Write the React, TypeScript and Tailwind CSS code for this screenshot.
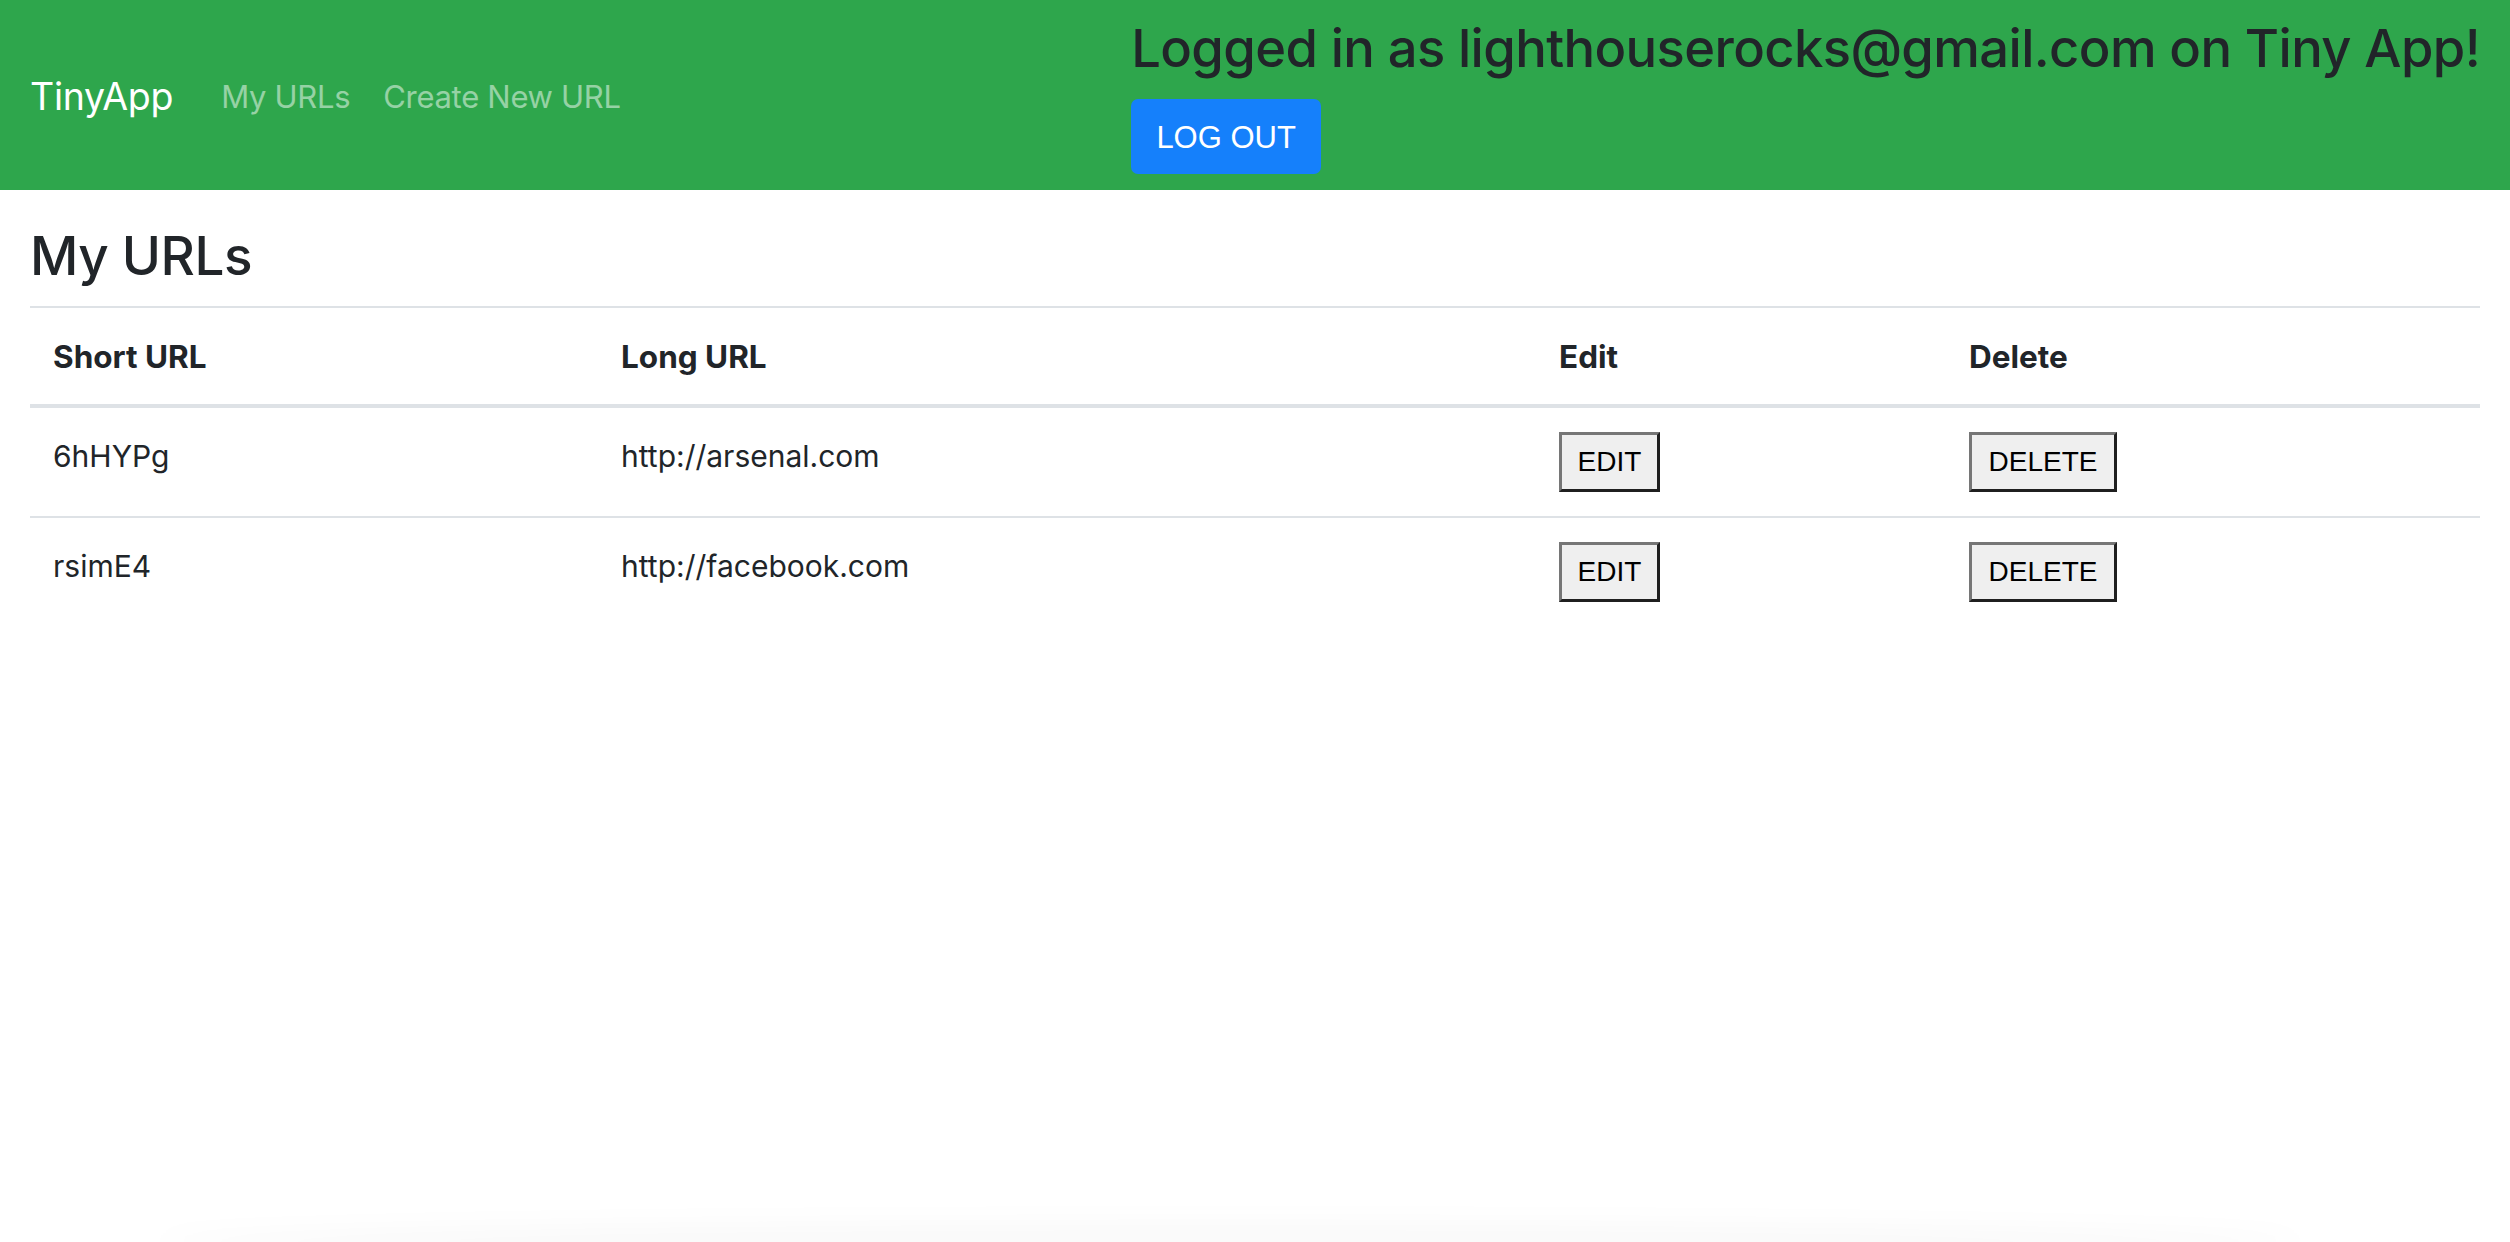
import React from "react";

const rows = [
  { short: "6hHYPg", long: "http://arsenal.com" },
  { short: "rsimE4", long: "http://facebook.com" },
];

function LegacyButton({ label, width }: { label: string; width: string }) {
  return (
    <button
      className={`${width} h-[60px] bg-[#efefef] border-[3px] border-t-[#767676] border-l-[#767676] border-b-[#1f1f1f] border-r-[#1f1f1f] text-black text-[28px] leading-none flex items-center justify-center`}
      style={{ fontFamily: '"Liberation Sans", Arial, sans-serif' }}
    >
      {label}
    </button>
  );
}

export default function App() {
  return (
    <div
      className="relative min-h-screen bg-white text-[#212529] overflow-hidden"
      style={{ fontFamily: 'Inter, "Noto Sans", sans-serif' }}
    >
      <nav className="h-[190px] bg-[#2ea64c] flex items-center px-[30px]">
        <div className="flex items-center pt-[4px]">
          <span className="text-white text-[37.5px] leading-[1.5] tracking-[-0.3px]">TinyApp</span>
          <a className="ml-[48px] text-white/50 text-[31px] leading-[1.5] tracking-[-0.3px]">My URLs</a>
          <a className="ml-[33px] text-white/50 text-[31px] leading-[1.5] tracking-[-0.3px]">Create New URL</a>
        </div>
        <div className="ml-auto flex flex-col items-start">
          <h3 className="text-[52.5px] leading-[64px] font-medium tracking-[-0.6px] text-[#212529] mb-[19px]">
            Logged in as lighthouserocks@gmail.com on Tiny App!
          </h3>
          <button
            className="w-[190px] h-[75px] rounded-[7px] bg-[#1580fb] text-white text-[31px] flex items-center justify-center pt-[3px]"
            style={{ fontFamily: '"Liberation Sans", Arial, sans-serif' }}
          >
            LOG OUT
          </button>
        </div>
      </nav>

      <main className="px-[30px] pt-[34px]">
        <h2 className="text-[53px] leading-[64px] font-medium tracking-[-0.5px] mb-[18px]">My URLs</h2>
        <table className="w-full border-collapse text-[30px] leading-[45px]">
          <thead>
            <tr className="border-t-2 border-[#dee2e6] border-b-4 border-b-[#dee2e6]">
              <th className="w-[568px] text-left font-bold text-[31.5px] px-[23px] pt-[26px] pb-[25px]">Short URL</th>
              <th className="w-[938px] text-left font-bold text-[31.5px] px-[23px] pt-[26px] pb-[25px]">Long URL</th>
              <th className="w-[410px] text-left font-bold text-[31.5px] px-[23px] pt-[26px] pb-[25px]">Edit</th>
              <th className="text-left font-bold text-[31.5px] px-[23px] pt-[26px] pb-[25px]">Delete</th>
            </tr>
          </thead>
          <tbody>
            {rows.map((r, i) => (
              <tr key={r.short} className={i > 0 ? "border-t-2 border-[#dee2e6]" : ""}>
                <td className="align-top px-[23px] pt-[26px] pb-[24px]">{r.short}</td>
                <td className="align-top px-[23px] pt-[26px] pb-[24px]">{r.long}</td>
                <td className="align-top px-[23px] pt-[24px] pb-[24px]">
                  <LegacyButton label="EDIT" width="w-[101px]" />
                </td>
                <td className="align-top px-[23px] pt-[24px] pb-[24px]">
                  <LegacyButton label="DELETE" width="w-[148px]" />
                </td>
              </tr>
            ))}
          </tbody>
        </table>
      </main>

      <div className="pointer-events-none absolute bottom-[-20px] left-[160px] right-[210px] h-[40px] rounded-[50%] bg-black/[0.025] blur-[12px]" />
    </div>
  );
}
